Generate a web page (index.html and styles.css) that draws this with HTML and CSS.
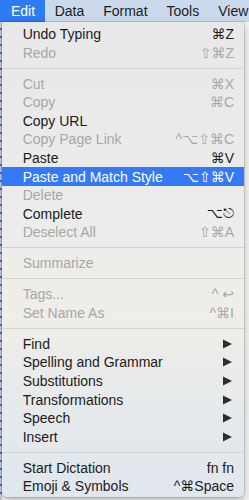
FILE: index.html
```html
<!DOCTYPE html>
<html>
<head>
<meta charset="utf-8">
<link rel="stylesheet" href="styles.css">
</head>
<body>
<div class="menubar">
  <span class="mb-item active">Edit</span>
  <span class="mb-item">Data</span>
  <span class="mb-item">Format</span>
  <span class="mb-item">Tools</span>
  <span class="mb-item">View</span>
</div>
<div class="stage">
  <div class="left-strip"></div>
  <div class="menu">
    <div class="row"><span>Undo Typing</span><span class="sc">⌘Z</span></div>
    <div class="row dis"><span>Redo</span><span class="sc">⇧⌘Z</span></div>
    <div class="sep"></div>
    <div class="row dis"><span>Cut</span><span class="sc">⌘X</span></div>
    <div class="row dis"><span>Copy</span><span class="sc">⌘C</span></div>
    <div class="row"><span>Copy URL</span></div>
    <div class="row dis"><span>Copy Page Link</span><span class="sc">^⌥⇧⌘C</span></div>
    <div class="row"><span>Paste</span><span class="sc">⌘V</span></div>
    <div class="row hl"><span>Paste and Match Style</span><span class="sc">⌥⇧⌘V</span></div>
    <div class="row dis"><span>Delete</span></div>
    <div class="row"><span>Complete</span><span class="sc">⌥⎋</span></div>
    <div class="row dis"><span>Deselect All</span><span class="sc">⇧⌘A</span></div>
    <div class="sep"></div>
    <div class="row dis"><span>Summarize</span></div>
    <div class="sep"></div>
    <div class="row dis"><span>Tags...</span><span class="sc">^ ↩</span></div>
    <div class="row dis"><span>Set Name As</span><span class="sc">^⌘I</span></div>
    <div class="sep"></div>
    <div class="row"><span>Find</span><svg class="arrow" width="9" height="10" viewBox="0 0 9 10"><polygon points="0,0.5 9,5 0,9.5"/></svg></div>
    <div class="row"><span>Spelling and Grammar</span><svg class="arrow" width="9" height="10" viewBox="0 0 9 10"><polygon points="0,0.5 9,5 0,9.5"/></svg></div>
    <div class="row"><span>Substitutions</span><svg class="arrow" width="9" height="10" viewBox="0 0 9 10"><polygon points="0,0.5 9,5 0,9.5"/></svg></div>
    <div class="row"><span>Transformations</span><svg class="arrow" width="9" height="10" viewBox="0 0 9 10"><polygon points="0,0.5 9,5 0,9.5"/></svg></div>
    <div class="row"><span>Speech</span><svg class="arrow" width="9" height="10" viewBox="0 0 9 10"><polygon points="0,0.5 9,5 0,9.5"/></svg></div>
    <div class="row"><span>Insert</span><svg class="arrow" width="9" height="10" viewBox="0 0 9 10"><polygon points="0,0.5 9,5 0,9.5"/></svg></div>
    <div class="sep"></div>
    <div class="row"><span>Start Dictation</span><span class="sc">fn fn</span></div>
    <div class="row"><span>Emoji &amp; Symbols</span><span class="sc">^⌘Space</span></div>
  </div>
</div>
</body>
</html>
```
FILE: styles.css
```css
html, body {
  margin: 0;
  padding: 0;
}
body {
  width: 249px;
  height: 500px;
  overflow: hidden;
  background: #f4f4f4;
  font-family: "Liberation Sans", Arial, sans-serif;
  font-size: 14px;
  color: #1b1b1b;
}
.menubar {
  height: 22px;
  display: flex;
  align-items: center;
  background: #cad9ec;
  white-space: nowrap;
}
.mb-item {
  height: 22px;
  line-height: 22px;
  padding: 0 9.5px;
  color: #1c1c1c;
}
.mb-item.active {
  background: #2f7bf2;
  color: #ffffff;
  padding: 0 10px 0 11px;
}
.stage {
  display: flex;
  height: 478px;
}
.left-strip {
  width: 2px;
  background: repeating-linear-gradient(to bottom, #c9cfdc 0, #c9cfdc 6px, #4a6fd8 6px, #4a6fd8 8px);
}
.menu {
  width: 242px;
  height: 475px;
  box-sizing: border-box;
  padding-top: 2.7px;
  background: linear-gradient(to bottom, #e8e8e9 0%, #ececeb 40%, #efeee9 62%, #e5e9ec 85%, #e0e7ee 100%);
  border-radius: 0 0 5px 5px;
  box-shadow: 0 0 0 1px rgba(0,0,0,0.12), 0 4px 10px rgba(0,0,0,0.25);
}
.row {
  height: 18.6px;
  display: flex;
  align-items: center;
  justify-content: space-between;
  padding: 0 10px 0 20.7px;
  white-space: nowrap;
  color: #1b1b1b;
}
.row.dis {
  color: #a7a7a7;
}
.row.hl {
  background: #3479f5;
  color: #ffffff;
}
.sc {
  font-family: "Liberation Sans", "DejaVu Sans", sans-serif;
}
.arrow {
  fill: #2e2e2e;
  margin-right: 2px;
}
.sep {
  height: 12.4px;
  display: flex;
  align-items: center;
}
.sep::before {
  content: "";
  display: block;
  width: 100%;
  height: 1px;
  background: #d3d3d3;
}
```
